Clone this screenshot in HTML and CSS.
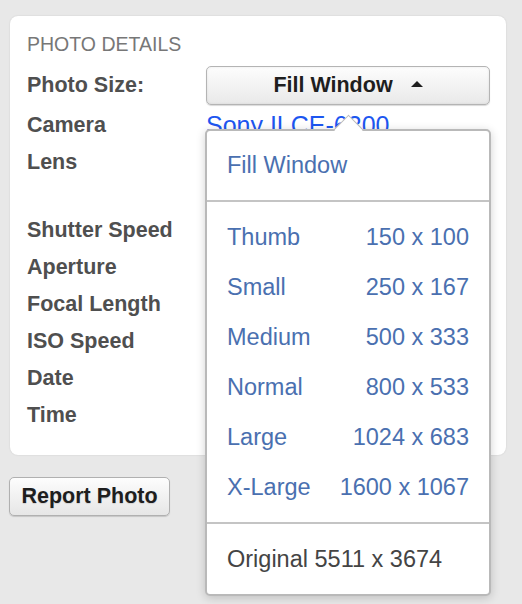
FILE: index.html
```html
<!DOCTYPE html>
<html lang="en">
<head>
    <meta charset="UTF-8">
    <meta name="viewport" content="width=device-width, initial-scale=1.0">
    <title>Photo Details</title>
    <link rel="stylesheet" href="styles.css">
</head>
<body>

<div class="page">
    <div class="card">
        <h2 class="card-title">Photo Details</h2>

        <div class="details">
            <div class="row size-row">
                <span class="label">Photo Size:</span>
                <div class="value size-picker">
                    <button class="size-btn">Fill Window <span class="tri"></span></button>

                    <div class="size-menu">
                        <div class="menu-group">
                            <a class="menu-item">Fill Window</a>
                        </div>
                        <div class="menu-group">
                            <a class="menu-item"><span>Thumb</span><span>150 x 100</span></a>
                            <a class="menu-item"><span>Small</span><span>250 x 167</span></a>
                            <a class="menu-item"><span>Medium</span><span>500 x 333</span></a>
                            <a class="menu-item"><span>Normal</span><span>800 x 533</span></a>
                            <a class="menu-item"><span>Large</span><span>1024 x 683</span></a>
                            <a class="menu-item"><span>X-Large</span><span>1600 x 1067</span></a>
                        </div>
                        <div class="menu-group">
                            <a class="menu-item original">Original 5511 x 3674</a>
                        </div>
                    </div>
                </div>
            </div>
            <div class="row">
                <span class="label">Camera</span>
                <a class="value link" href="#">Sony ILCE-6300</a>
            </div>
            <!-- values below sit under the open size menu -->
            <div class="row lens-row">
                <span class="label">Lens</span>
                <span class="value"></span>
            </div>
            <div class="row">
                <span class="label">Shutter Speed</span>
                <span class="value"></span>
            </div>
            <div class="row">
                <span class="label">Aperture</span>
                <span class="value"></span>
            </div>
            <div class="row">
                <span class="label">Focal Length</span>
                <span class="value"></span>
            </div>
            <div class="row">
                <span class="label">ISO Speed</span>
                <span class="value"></span>
            </div>
            <div class="row">
                <span class="label">Date</span>
                <span class="value"></span>
            </div>
            <div class="row">
                <span class="label">Time</span>
                <span class="value"></span>
            </div>
        </div>
    </div>

    <button class="report-btn">Report Photo</button>
</div>

</body>
</html>
```

FILE: styles.css
```css
body {
    margin: 0;
    background-color: #e8e8e8;
    font-family: "Liberation Sans", Arial, sans-serif;
    font-size: 21.5px;
    color: #555;
}

.page {
    min-height: 100vh;
    box-sizing: border-box;
    padding: 16px 16px 0 10px;
}

.card {
    background-color: #fff;
    border-radius: 8px;
    box-shadow: 0 0 2px rgba(0, 0, 0, 0.12);
    padding: 16px 16px 18px 17px;
}

.card-title {
    margin: 0 0 10px 0;
    font-size: 19.5px;
    font-weight: normal;
    line-height: 24px;
    text-transform: uppercase;
    color: #777;
}

.row {
    display: grid;
    grid-template-columns: 179px 1fr;
    line-height: 31px;
    min-height: 31px;
    padding-bottom: 6px;
}

.lens-row {
    min-height: 62px;
}

.label {
    font-weight: bold;
    color: #4f4f4f;
}

.value {
    color: #555;
}

.link {
    font-size: 25px;
    color: #1d56f0;
    text-decoration: underline;
}

.size-row {
    align-items: center;
    padding-bottom: 5px;
}

.size-picker {
    position: relative;
}

/* dropdown button */
.size-btn {
    width: 100%;
    height: 39px;
    display: flex;
    align-items: center;
    justify-content: center;
    font-family: inherit;
    font-size: 21.5px;
    font-weight: bold;
    color: #1e1e1e;
    background: linear-gradient(#fdfdfd, #e9e9e9);
    border: 1px solid #b4b4b4;
    border-radius: 5px;
    box-shadow: 0 1px 1px rgba(0, 0, 0, 0.15), inset 0 0 3px rgba(0, 0, 0, 0.08);
    padding: 0;
    cursor: pointer;
}

.tri {
    display: inline-block;
    width: 0;
    height: 0;
    margin-left: 18px;
    margin-bottom: 3px;
    border-left: 6px solid transparent;
    border-right: 6px solid transparent;
    border-bottom: 6px solid #1e1e1e;
}

/* size menu */
.size-menu {
    position: absolute;
    top: 63px;
    left: -1px;
    right: -1px;
    z-index: 5;
    background-color: #fff;
    border: 2px solid #b9b9b9;
    border-radius: 5px;
    box-shadow: 0 2px 10px rgba(0, 0, 0, 0.18);
}

.size-menu::before {
    content: "";
    position: absolute;
    top: -12px;
    left: calc(50% - 10px);
    width: 20px;
    height: 20px;
    background-color: #fff;
    border-left: 1.5px solid #b9b9b9;
    border-top: 1.5px solid #b9b9b9;
    transform: rotate(45deg);
}

.menu-group {
    position: relative;
    padding: 10px 0;
    border-top: 2px solid #c4c4c4;
}

.menu-group:first-child {
    border-top: none;
    padding-top: 9px;
}

.menu-item {
    display: flex;
    justify-content: space-between;
    align-items: center;
    height: 50px;
    padding: 0 20px;
    font-size: 23.5px;
    color: #4a70b0;
    cursor: pointer;
}

.menu-item.original {
    color: #444;
}

.report-btn {
    margin-top: 22px;
    margin-left: -1px;
    width: 161px;
    height: 39px;
    font-family: inherit;
    font-size: 21.5px;
    font-weight: bold;
    color: #1e1e1e;
    background: linear-gradient(#fdfdfd, #e6e6e6);
    border: 1px solid #b0b0b0;
    border-radius: 5px;
    box-shadow: 0 1px 1px rgba(0, 0, 0, 0.15);
    text-shadow: 0 1px 1px rgba(0, 0, 0, 0.12);
    padding: 0;
    cursor: pointer;
}
```
